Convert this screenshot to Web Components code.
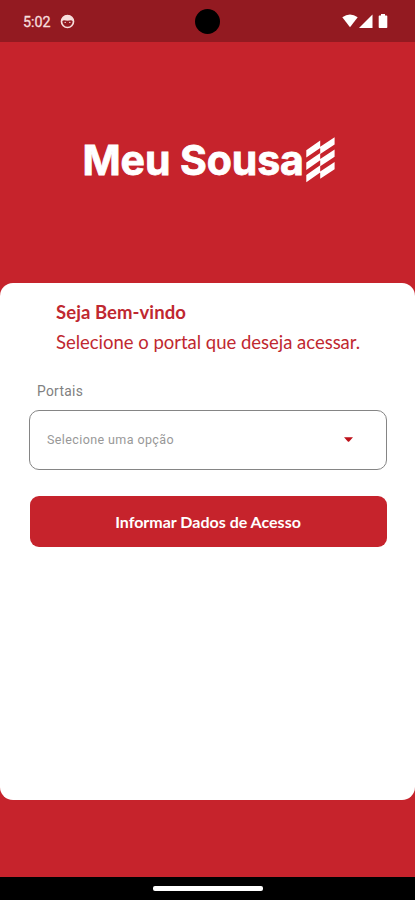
<!DOCTYPE html>
<html lang="pt-BR">
<head>
<meta charset="utf-8">
<title>Meu Sousa</title>
<style>
html,body{margin:0;height:100%;overflow:hidden;background:#c6232c}
</style>
</head>
<body>
<meu-sousa-app></meu-sousa-app>
<script>
const define = (name, html) => customElements.define(name, class extends HTMLElement {
  constructor() {
    super();
    this.attachShadow({ mode: 'open' }).innerHTML = html;
  }
});

define('status-bar', `
<style>
:host{display:flex;align-items:center;height:42px;background:#931a21;padding:0 27px 0 23px;box-sizing:border-box;position:relative;font:400 14.3px/20px Roboto,sans-serif;color:#f8dedd}
.time{margin:2px 9px 0 0;width:28px;-webkit-text-stroke:.3px #f8dedd}
.face{margin-top:1px}
.signals{margin-left:auto}
.camera{position:absolute;left:195px;top:9px;width:25px;height:25px;border-radius:50%;background:#000}
svg{display:block}
</style>
<span class="time">5:02</span>
<svg class="face" width="15" height="15" viewBox="0 0 15 15"><circle cx="7.5" cy="7.5" r="6" fill="none" stroke="#f8dedd" stroke-width="1.7"/><path d="M1.8 7C2 3 4.5 1.2 7.5 1.2S13 3 13.2 7L11 6.3 7.5 6.7 4 6.3Z" fill="#f8dedd"/><circle cx="5.2" cy="8.4" r=".7" fill="#f8dedd"/><circle cx="9.8" cy="8.4" r=".7" fill="#f8dedd"/></svg>
<span class="camera"></span>
<svg class="signals" width="46" height="16" viewBox="0 0 46 16" fill="#fff"><path d="M.3 4.2Q8 -1.2 15.7 4.2L8 14.3Z"/><path d="M30.5 1.5V15H17Z"/><path d="M36.7 3.3Q36.7 2.5 37.5 2.5H39V1H43V2.5H44.5Q45.3 2.5 45.3 3.3V14.2Q45.3 15 44.5 15H37.5Q36.7 15 36.7 14.2Z"/></svg>
`);

define('brand-logo', `
<style>
:host{display:flex;align-items:center;justify-content:flex-start;height:241px;padding-left:82.5px;box-sizing:border-box;color:#fff;font:700 41px/50px Inter,sans-serif;letter-spacing:-.1px}
.name{white-space:nowrap;width:222.5px;margin-top:-5px;-webkit-text-stroke:.8px #fff}
svg{display:block;margin-top:-6px;flex:none}
</style>
<span class="name">Meu Sousa</span>
<svg width="30" height="46" viewBox="0 0 30 46" fill="#fff"><path d="M1.3 13.3L15.2 3.6V10.9L1.3 20.6ZM1.3 25.6L15.2 15.9V23.2L1.3 32.9ZM1.3 38L15.2 28.3V35.6L1.3 45.3ZM15.2 9.7L29.6 .2V7.5L15.2 17ZM15.2 22L29.6 12.5V19.8L15.2 29.3ZM15.2 34.4L29.6 24.9V32.2L15.2 41.7Z"/></svg>
`);

define('welcome-text', `
<style>
:host{display:block;padding:14px 0 0 56px;color:#c02830;font:18.5px/30px Lato,sans-serif;white-space:nowrap}
h1,p{margin:0;font-size:inherit}
h1{font-weight:700;letter-spacing:.07px}
p{letter-spacing:-.02px}
</style>
<h1><slot name="title"></slot></h1><p><slot></slot></p>
`);

define('select-field', `
<style>
:host{display:block;padding:24px 28.5px 0 29px}
label{display:block;padding-left:8px;color:#808080;font:13.8px/20px Roboto,sans-serif;letter-spacing:.3px}
.box{display:flex;align-items:center;justify-content:space-between;box-sizing:border-box;height:60px;margin-top:8.5px;border:1.3px solid #858585;border-radius:10px;padding:0 33px 0 17px;color:#989898;font:12.5px/20px Roboto,sans-serif;letter-spacing:.4px}
</style>
<label><slot name="label"></slot></label>
<div class="box"><span><slot></slot></span><svg width="9" height="5" viewBox="0 0 9 5"><path d="M0 .3H9L5.2 4.5Q4.5 5 3.8 4.5Z" fill="#bd1019"/></svg></div>
`);

define('primary-button', `
<style>
:host{display:block;padding:26px 28.5px 0 29.5px}
button{display:block;width:100%;height:51.5px;border:0;border-radius:9px;padding:1px 0 0;background:#c6232c;color:#fff;font:700 16px/20px Lato,sans-serif}
</style>
<button><slot></slot></button>
`);

define('nav-pill', `
<style>
:host{display:flex;justify-content:center;height:23px;background:#000}
span{width:110px;height:4.5px;margin-top:9px;border-radius:2px;background:#fff}
</style><span></span>
`);

define('meu-sousa-app', `
<style>
:host{display:flex;flex-direction:column;width:415px;height:900px;background:#c6232c}
main{height:516.5px;background:#fff;border-radius:13px;margin-bottom:auto}
</style>
<status-bar></status-bar>
<brand-logo></brand-logo>
<main>
<welcome-text><span slot="title">Seja Bem-vindo</span>Selecione o portal que deseja acessar.</welcome-text>
<select-field><span slot="label">Portais</span>Selecione uma opção</select-field>
<primary-button>Informar Dados de Acesso</primary-button>
</main>
<nav-pill></nav-pill>
`);
</script>
</body>
</html>
